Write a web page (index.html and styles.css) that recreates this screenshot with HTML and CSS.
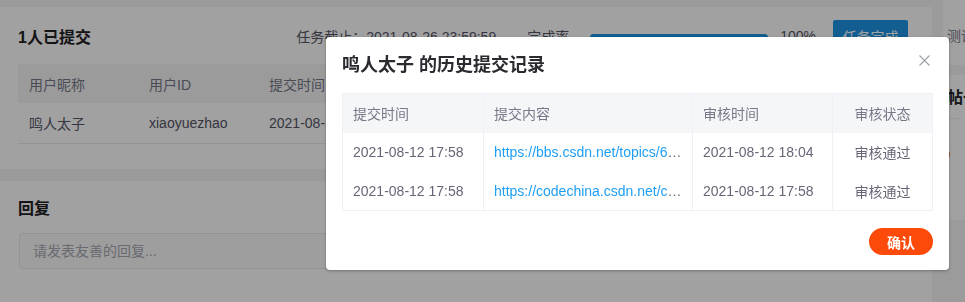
FILE: index.html
```html
<!DOCTYPE html>
<html lang="zh-CN">
<head>
  <meta charset="utf-8">
  <title>任务提交记录</title>
  <link rel="stylesheet" href="styles.css">
</head>
<body>
  <div class="page">
    <main class="main">
      <section class="card submit-card">
        <div class="card-head">
          <h2 class="card-title">1人已提交</h2>
          <div class="task-meta">
            <span class="deadline">任务截止：2021-08-26 23:59:59</span>
            <span class="rate-label">完成率</span>
            <div class="progress"><div class="progress-bar" style="width: 100%"></div></div>
            <span class="rate-num">100%</span>
            <button class="btn-done">任务完成</button>
          </div>
        </div>
        <table class="user-table">
          <thead>
            <tr><th>用户昵称</th><th>用户ID</th><th>提交时间</th><th>提交内容</th><th>审核状态</th><th>操作</th></tr>
          </thead>
          <tbody>
            <tr><td>鸣人太子</td><td>xiaoyuezhao</td><td>2021-08-12 17:58</td><td>查看</td><td>审核通过</td><td>历史记录</td></tr>
          </tbody>
        </table>
      </section>

      <section class="card reply-card">
        <h2 class="card-title">回复</h2>
        <input class="reply-input" type="text" placeholder="请发表友善的回复...">
      </section>
    </main>

    <aside class="side">
      <div class="card side-card side-top">测评任务</div>
      <div class="card side-card">
        <div class="side-title">帖子推荐</div>
        <div class="side-avatar"></div>
      </div>
    </aside>
  </div>

  <!-- 弹窗遮罩 -->
  <div class="mask"></div>

  <div class="dialog">
    <div class="dialog-head">
      <span class="dialog-title">鸣人太子 的历史提交记录</span>
      <span class="dialog-close">
        <svg width="11" height="11" viewBox="0 0 11 11"><path d="M0.5 0.5 L10.5 10.5 M10.5 0.5 L0.5 10.5" stroke="#a0a3a8" stroke-width="1.2" fill="none"/></svg>
      </span>
    </div>
    <table class="history-table">
      <colgroup>
        <col style="width: 141px">
        <col style="width: 209px">
        <col style="width: 140px">
        <col>
      </colgroup>
      <thead>
        <tr><th>提交时间</th><th>提交内容</th><th>审核时间</th><th class="center">审核状态</th></tr>
      </thead>
      <tbody>
        <tr>
          <td>2021-08-12 17:58</td>
          <td><a class="link" href="#">https://bbs.csdn.net/topics/600387563</a></td>
          <td>2021-08-12 18:04</td>
          <td class="center">审核通过</td>
        </tr>
        <tr>
          <td>2021-08-12 17:58</td>
          <td><a class="link" href="#">https://codechina.csdn.net/codechina/xiaoyuezhao</a></td>
          <td>2021-08-12 17:58</td>
          <td class="center">审核通过</td>
        </tr>
      </tbody>
    </table>
    <div class="dialog-foot">
      <button class="btn-ok">确认</button>
    </div>
  </div>
</body>
</html>
```

FILE: styles.css
```css
body {
  margin: 0;
  padding: 0;
  background-color: #f5f6f7;
  font-family: "Liberation Sans", "Noto Sans CJK SC", sans-serif;
  font-size: 14px;
  color: #555666;
  overflow: hidden;
  height: 302px;
}

.page {
  display: flex;
  gap: 11px;
}

.main {
  width: 932px;
  flex-shrink: 0;
  padding-top: 7px;
  display: flex;
  flex-direction: column;
  gap: 12px;
}

.card {
  background-color: white;
}

.card-title {
  margin: 0;
  font-size: 16px;
  font-weight: 700;
  color: #222226;
}

/* 提交情况 */
.submit-card {
  padding: 13px 18px 25px;
}

.card-head {
  display: flex;
  justify-content: space-between;
  align-items: center;
  height: 32px;
}

.task-meta {
  display: flex;
  align-items: center;
  margin-right: 6px;
  color: #555666;
}

.deadline {
  margin-right: 31px;
}

.rate-label {
  margin-right: 21px;
}

.progress {
  width: 178px;
  height: 7px;
  border-radius: 4px;
  background-color: #e8e8ed;
  margin-right: 12px;
  margin-top: 3px;
}

.progress-bar {
  height: 100%;
  border-radius: 4px;
  background-color: #1e96e6;
}

.rate-num {
  margin-right: 17px;
}

.btn-done {
  width: 75px;
  height: 32px;
  border: none;
  border-radius: 2px;
  background-color: #1e96e6;
  color: white;
  font-family: inherit;
  font-size: 14px;
}

.user-table {
  width: 100%;
  margin-top: 12px;
  border-collapse: collapse;
  table-layout: fixed;
}

.user-table th,
.user-table td {
  text-align: left;
  padding: 0 11px;
  white-space: nowrap;
  overflow: hidden;
}

.user-table th {
  height: 39px;
  background-color: #f5f6f7;
  font-weight: 400;
  color: #777888;
}

.user-table td {
  height: 40px;
  border-bottom: 1px solid #ebebf0;
  color: #555666;
}

.user-table th:nth-child(1),
.user-table th:nth-child(2) {
  width: 98px;
}

/* 回复 */
.reply-card {
  padding: 14px 18px 0;
  height: 108px;
}

.reply-input {
  display: block;
  box-sizing: border-box;
  width: calc(100% - 1px);
  height: 36px;
  margin: 14px 0 0 1px;
  padding: 0 13px;
  border: 1px solid #e8e8ed;
  border-radius: 4px;
  font-family: inherit;
  font-size: 14px;
  background-color: #fafafb;
}

.reply-input::placeholder {
  color: #a8a8b3;
}

/* 右侧栏 */
.side {
  flex: 1;
  display: flex;
  flex-direction: column;
  gap: 10px;
  margin-top: -10px;
  overflow: hidden;
}

.side-card {
  padding: 0 4px;
  white-space: nowrap;
}

.side-top {
  height: 75px;
  line-height: 93px;
  color: #777888;
}

.side-title {
  font-size: 16px;
  font-weight: 700;
  color: #222226;
  line-height: 20px;
  padding: 13px 0 10px;
  border-bottom: 1px solid #f0f0f2;
}

.side-avatar {
  width: 7px;
  height: 11px;
  border-radius: 0 6px 6px 0;
  background-color: #e8703a;
  margin: 30px 0 60px -4px;
}

/* 遮罩与弹窗 */
.mask {
  position: fixed;
  inset: 0;
  background-color: rgba(0, 0, 0, 0.37);
}

.dialog {
  position: absolute;
  left: 326px;
  top: 37px;
  width: 623px;
  height: 233px;
  box-sizing: border-box;
  padding: 16px;
  background-color: white;
  border-radius: 4px;
  box-shadow: 0 1px 3px rgba(0, 0, 0, 0.3);
}

.dialog-head {
  display: flex;
  justify-content: space-between;
  align-items: center;
  height: 20px;
  margin-bottom: 20px;
}

.dialog-title {
  font-size: 18px;
  font-weight: 700;
  color: #2a2a30;
}

.dialog-close {
  display: flex;
  margin-right: 3px;
  margin-top: -5px;
}

.history-table {
  width: 100%;
  border-collapse: collapse;
  table-layout: fixed;
  border: 1px solid #eef0f5;
}

.history-table th,
.history-table td {
  height: 39px;
  box-sizing: border-box;
  padding: 0 10px;
  text-align: left;
  white-space: nowrap;
  overflow: hidden;
  text-overflow: ellipsis;
  border-left: 1px solid #eef0f5;
  font-weight: 400;
}

.history-table th {
  background-color: #f5f6f8;
  color: #777888;
}

.history-table td {
  color: #666677;
}

.history-table .center {
  text-align: center;
}

.link {
  color: #1e9ef5;
  text-decoration: none;
}

.dialog-foot {
  display: flex;
  justify-content: flex-end;
  margin-top: 17px;
}

.btn-ok {
  width: 64px;
  height: 27px;
  border: none;
  border-radius: 14px;
  background-color: #fc4a0a;
  color: white;
  font-family: inherit;
  font-size: 14px;
  font-weight: 700;
}
```
